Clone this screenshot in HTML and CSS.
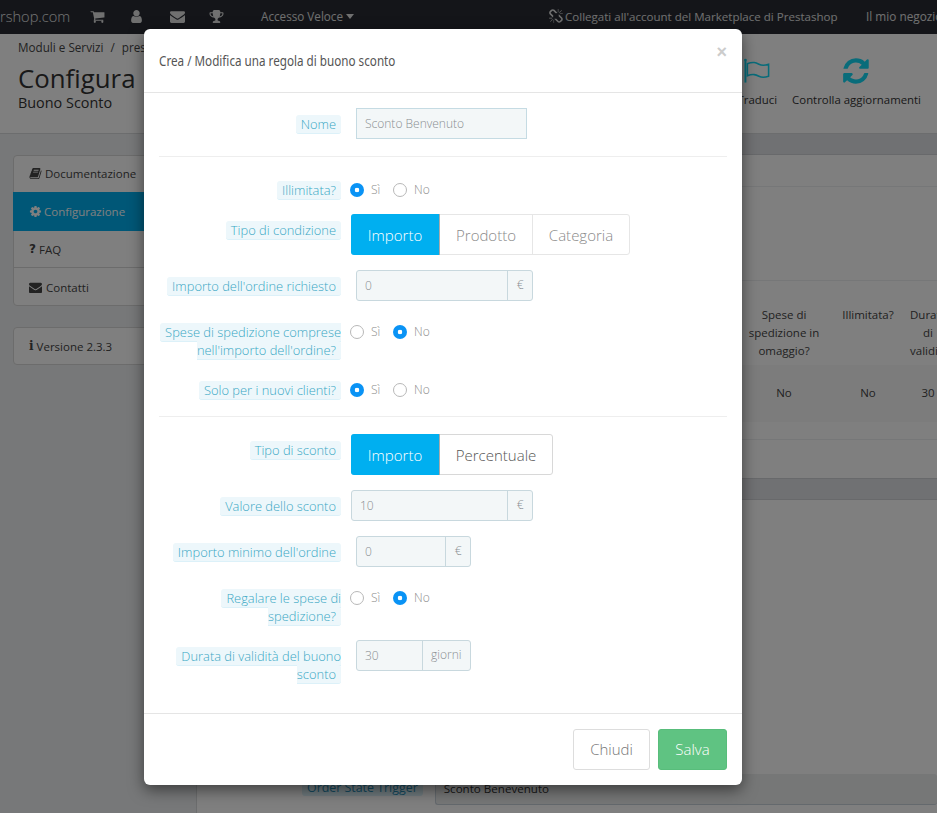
FILE: index.html
```html
<!DOCTYPE html>
<html lang="it">
<head>
<meta charset="utf-8">
<title>Configura Buono Sconto</title>
<link rel="stylesheet" href="styles.css">
</head>
<body>
<div class="page">
  <nav class="topnav">
    <span class="brand">rshop.com</span>
    <svg class="nav-ico ico-cart" viewBox="0 0 1792 1792"><path d="M704 1536q0 52-38 90t-90 38-90-38-38-90 38-90 90-38 90 38 38 90zm896 0q0 52-38 90t-90 38-90-38-38-90 38-90 90-38 90 38 38 90zm128-1088v512q0 24-16.500 42.500t-40.500 21.500l-1044 122q13 60 13 70 0 16-24 64h920q26 0 45 19t19 45-19 45-45 19h-1024q-26 0-45-19t-19-45q0-11 8-31.500t16-36 21.500-40 15.500-29.500l-177-823h-204q-26 0-45-19t-19-45 19-45 45-19h256q16 0 28.500 6.500t19.500 15.500 13 24.500 8 26 5.500 29.500 4.500 26h1201q26 0 45 19t19 45z"/></svg>
    <svg class="nav-ico ico-user" viewBox="0 0 1792 1792"><path d="M1536 1399q0 109-62.500 187t-150.500 78h-854q-88 0-150.500-78t-62.500-187q0-85 8.500-160.500t31.500-152 58.500-131 94-89 134.500-34.500q131 128 313 128t313-128q76 0 134.500 34.500t94 89 58.500 131 31.500 152 8.500 160.500zm-256-887q0 159-112.500 271.500t-271.500 112.500-271.500-112.500-112.500-271.500 112.500-271.500 271.500-112.500 271.500 112.500 112.500 271.500z"/></svg>
    <svg class="nav-ico ico-mail" viewBox="0 0 1792 1792"><path d="M1792 710v794q0 66-47 113t-113 47h-1472q-66 0-113-47t-47-113v-794q44 49 101 87 362 246 497 345 57 42 92.500 65.500t94.500 48 110 24.500h2q51 0 110-24.500t94.500-48 92.500-65.500q170-123 498-345 57-39 100-87zm0-294q0 79-49 151t-122 123q-376 261-468 325-10 7-42.500 30.500t-54 38-52 32.500-57.500 27-50 9h-2q-23 0-50-9t-57.500-27-52-32.500-54-38-42.500-30.500q-91-64-262-182.500t-205-142.500q-62-42-117-115.500t-55-136.500q0-78 41.500-130t118.500-52h1472q65 0 112.500 47t47.500 113z"/></svg>
    <svg class="nav-ico ico-trophy" viewBox="0 0 1792 1792"><path d="M522 883q-74-162-74-371h-256v96q0 78 94.500 162t235.500 113zm1078-275v-96h-256q0 209-74 371 141-29 235.500-113t94.500-162zm128-128v128q0 71-41.500 143t-112 130-173 97.500-215.500 44.500q-42 54-95 95-38 34-52.500 72.500t-14.500 89.500q0 54 30.500 91t97.500 37q75 0 133.500 45.500t58.500 114.500v64q0 14-9 23t-23 9h-832q-14 0-23-9t-9-23v-64q0-69 58.500-114.500t133.500-45.500q67 0 97.500-37t30.500-91q0-51-14.500-89.500t-52.500-72.500q-53-41-95-95-113-5-215.500-44.500t-173-97.500-112-130-41.500-143v-128q0-40 28-68t68-28h288v-96q0-66 47-113t113-47h576q66 0 113 47t47 113v96h288q40 0 68 28t28 68z"/></svg>
    <span class="quick">Accesso Veloce<i class="caret"></i></span>
    <svg class="ico-unlink" viewBox="0 0 1792 1792"><path d="M439 1271l-256 256q-11 9-23 9t-23-9q-9-10-9-23t9-23l256-256q10-9 23-9t23 9q9 10 9 23t-9 23zm169 41v320q0 14-9 23t-23 9-23-9-9-23v-320q0-14 9-23t23-9 23 9 9 23zm-224-224q0 14-9 23t-23 9h-320q-14 0-23-9t-9-23 9-23 23-9h320q14 0 23 9t9 23zm1264 128q0 120-85 203l-147 146q-83 83-203 83-121 0-204-85l-334-335q-21-21-42-56l239-18 273 274q27 27 68 27.500t68-26.500l147-146q28-28 28-67 0-40-28-68l-274-275 18-239q35 21 56 42l336 336q84 86 84 204zm-617-724l-239 18-273-274q-28-28-68-28-39 0-68 27l-147 146q-28 28-28 67 0 40 28 68l274 274-18 240q-35-21-56-42l-336-336q-84-86-84-204 0-120 85-203l147-146q83-83 203-83 121 0 204 85l334 335q21 21 42 56zm633 84q0 14-9 23t-23 9h-320q-14 0-23-9t-9-23 9-23 23-9h320q14 0 23 9t9 23zm-544-544v320q0 14-9 23t-23 9-23-9-9-23v-320q0-14 9-23t23-9 23 9 9 23zm407 151l-256 256q-11 9-23 9t-23-9q-9-10-9-23t9-23l256-256q10-9 23-9t23 9q9 10 9 23t-9 23z"/></svg>
    <span class="market">Collegati all'account del Marketplace di Prestashop</span>
    <span class="shop">Il mio negozio</span>
  </nav>

  <header class="pagehead">
    <div class="head-left">
      <div class="crumbs">Moduli e Servizi <span class="sep">/</span> prestashop</div>
      <h1 class="head-title">Configura</h1>
      <div class="head-sub">Buono Sconto</div>
    </div>
    <div class="toolbar">
      <div class="tool">
        <svg class="tool-ico" viewBox="0 0 28 26" fill="none" stroke="currentColor" stroke-width="1.600"><path d="M1.500 1v24" stroke-width="2"/><circle cx="1.500" cy="1.500" r="1.300" fill="currentColor" stroke="none"/><path d="M3.500 5.500c6-2.500 9-1 12 .5 3 1.500 5.500 1.500 10 0v12.500c-4.500 1.500-7 1.500-10 0-3-1.500-6-3-12-.5z"/></svg>
        <span>Traduci</span>
      </div>
      <div class="tool">
        <svg class="tool-ico tool-ico-fill" viewBox="190 120 1480 1560"><path d="M1639 1056q0 5-1 7-64 268-268 434.500t-478 166.500q-146 0-282.500-55t-243.500-157l-129 129q-19 19-45 19t-45-19-19-45v-448q0-26 19-45t45-19h448q26 0 45 19t19 45-19 45l-137 137q71 66 161 102t187 36q134 0 250-65t186-179q11-17 53-117 8-23 30-23h192q13 0 22.500 9.500t9.500 22.500zm25-800v448q0 26-19 45t-45 19h-448q-26 0-45-19t-19-45 19-45l138-138q-148-137-349-137-134 0-250 65t-186 179q-11 17-53 117-8 23-30 23h-199q-13 0-22.500-9.500t-9.500-22.500v-7q65-268 270-434.500t480-166.500q146 0 284 55.500t245 156.500l130-129q19-19 45-19t45 19 19 45z"/></svg>
        <span>Controlla aggiornamenti</span>
      </div>
    </div>
  </header>

  <div class="content">
    <aside class="sidebar">
      <div class="side-panel">
        <div class="side-item item-doc">
          <svg class="side-ico" viewBox="0 0 1792 1792"><path d="M1703 478q40 57 18 129l-275 906q-19 64-76.500 107.500t-122.500 43.500h-923q-77 0-148.500-53.500t-99.500-131.500q-24-67-2-127 0-4 3-27t4-37q1-8-3-21.500t-3-19.500q2-11 8-21t16.500-23.500 16.500-23.500q23-38 45-91.500t30-91.500q3-10 .5-30t-.5-28q3-11 17-28t17-23q21-36 42-92t25-90q1-9-2.500-32t.5-28q4-13 22-30.500t22-22.500q19-26 42.500-84.500t27.500-96.500q1-8-3-25.500t-2-26.500q2-8 9-18t18-23 17-21q8-12 16.500-30.500t15-35 16-36 19.500-32 26.500-23.500 36-11.500 47.500 5.500l-1 3q38-9 51-9h761q74 0 114 56t18 130l-274 906q-36 119-71.500 153.500t-128.500 34.500h-869q-27 0-38 15-11 16-1 43 24 70 144 70h923q29 0 56-15.500t35-41.500l300-987q7-22 5-57 38 15 59 43zm-1064 2q-4 13 2 22.500t20 9.500h608q13 0 25.500-9.500t16.500-22.500l21-64q4-13-2-22.500t-20-9.500h-608q-13 0-25.500 9.500t-16.500 22.500zm-83 256q-4 13 2 22.500t20 9.500h608q13 0 25.500-9.500t16.500-22.500l21-64q4-13-2-22.500t-20-9.500h-608q-13 0-25.500 9.500t-16.500 22.500z"/></svg>
          Documentazione
        </div>
        <div class="side-item item-active">
          <svg class="side-ico" viewBox="0 0 1792 1792"><path d="M1152 896q0-106-75-181t-181-75-181 75-75 181 75 181 181 75 181-75 75-181zm512-109v222q0 12-8 23t-20 13l-185 28q-19 54-39 91 35 50 107 138 10 12 10 25t-9 23q-27 37-99 108t-94 71q-12 0-26-9l-138-108q-44 23-91 38-16 136-29 186-7 28-36 28h-222q-14 0-24.500-8.500t-11.500-21.500l-28-184q-49-16-90-37l-141 107q-10 9-25 9-14 0-25-11-126-114-165-168-7-10-7-23 0-12 8-23 15-21 51-66.500t54-70.500q-27-50-41-99l-183-27q-13-2-21-12.500t-8-23.500v-222q0-12 8-23t19-13l186-28q14-46 39-92-40-57-107-138-10-12-10-24 0-10 9-23 26-36 98.500-107.500t94.500-71.500q13 0 26 10l138 107q44-23 91-38 16-136 29-186 7-28 36-28h222q14 0 24.500 8.500t11.500 21.500l28 184q49 16 90 37l142-107q9-9 24-9 13 0 25 10 129 119 165 170 7 8 7 22 0 12-8 23-15 21-51 66.500t-54 70.500q26 50 41 98l183 28q13 2 21 12.500t8 23.500z"/></svg>
          Configurazione
        </div>
        <div class="side-item item-faq"><b class="glyph">?</b> FAQ</div>
        <div class="side-item item-contact">
          <svg class="side-ico" viewBox="0 0 1792 1792"><path d="M1792 710v794q0 66-47 113t-113 47h-1472q-66 0-113-47t-47-113v-794q44 49 101 87 362 246 497 345 57 42 92.500 65.500t94.500 48 110 24.500h2q51 0 110-24.500t94.500-48 92.500-65.500q170-123 498-345 57-39 100-87zm0-294q0 79-49 151t-122 123q-376 261-468 325-10 7-42.500 30.500t-54 38-52 32.500-57.500 27-50 9h-2q-23 0-50-9t-57.500-27-52-32.500-54-38-42.500-30.500q-91-64-262-182.500t-205-142.500q-62-42-117-115.500t-55-136.500q0-78 41.500-130t118.500-52h1472q65 0 112.500 47t47.500 113z"/></svg>
          Contatti
        </div>
      </div>
      <div class="side-panel version"><b class="glyph glyph-i">i</b> Versione 2.3.3</div>
    </aside>

    <main class="main">
      <div class="band"></div>
      <div class="sec sec-a"></div>
      <div class="sec sec-b"></div>
      <div class="sec sec-table">
        <div class="t-row t-head">
          <div class="t-fill"></div>
          <div class="t-cell">Spese di<br>spedizione in<br>omaggio?</div>
          <div class="t-cell">Illimitata?</div>
          <div class="t-cell">Durata<br>di<br>validità</div>
        </div>
        <div class="t-row t-body">
          <div class="t-fill"></div>
          <div class="t-cell">No</div>
          <div class="t-cell">No</div>
          <div class="t-cell">30</div>
        </div>
      </div>
      <div class="sec sec-c"></div>
      <div class="band band-2"></div>
      <div class="form-end">
        <span class="end-label">Order State Trigger</span>
        <div class="end-input">Sconto Benevenuto</div>
      </div>
    </main>
  </div>
</div>

<div class="backdrop"></div>

<div class="modal">
  <div class="modal-head">
    <h4 class="modal-title">Crea / Modifica una regola di buono sconto</h4>
    <span class="close">×</span>
  </div>
  <div class="modal-body">
    <div class="row">
      <div class="lab"><span class="pill">Nome</span></div>
      <div class="ctl indent"><div class="text-input">Sconto Benvenuto</div></div>
    </div>
    <hr class="rule">

    <div class="row">
      <div class="lab"><span class="pill">Illimitata?</span></div>
      <div class="ctl radios">
        <span class="radio on"></span><span class="r-text">Sì</span>
        <span class="radio"></span><span class="r-text">No</span>
      </div>
    </div>
    <div class="row">
      <div class="lab"><span class="pill">Tipo di condizione</span></div>
      <div class="ctl">
        <div class="seg">
          <span class="seg-btn active w88">Importo</span>
          <span class="seg-btn muted w93">Prodotto</span>
          <span class="seg-btn muted w98">Categoria</span>
        </div>
      </div>
    </div>
    <div class="row">
      <div class="lab"><span class="pill">Importo dell'ordine richiesto</span></div>
      <div class="ctl indent">
        <div class="group w177"><span class="val">0</span><span class="addon">€</span></div>
      </div>
    </div>
    <div class="row">
      <div class="lab"><span class="pill">Spese di spedizione comprese<br>nell'importo dell'ordine?</span></div>
      <div class="ctl radios">
        <span class="radio"></span><span class="r-text">Sì</span>
        <span class="radio on"></span><span class="r-text">No</span>
      </div>
    </div>
    <div class="row">
      <div class="lab"><span class="pill">Solo per i nuovi clienti?</span></div>
      <div class="ctl radios">
        <span class="radio on"></span><span class="r-text">Sì</span>
        <span class="radio"></span><span class="r-text">No</span>
      </div>
    </div>
    <hr class="rule">

    <div class="row">
      <div class="lab"><span class="pill">Tipo di sconto</span></div>
      <div class="ctl">
        <div class="seg seg-strong">
          <span class="seg-btn active w88">Importo</span>
          <span class="seg-btn w114">Percentuale</span>
        </div>
      </div>
    </div>
    <div class="row">
      <div class="lab"><span class="pill">Valore dello sconto</span></div>
      <div class="ctl">
        <div class="group w182"><span class="val">10</span><span class="addon">€</span></div>
      </div>
    </div>
    <div class="row">
      <div class="lab"><span class="pill">Importo minimo dell'ordine</span></div>
      <div class="ctl indent">
        <div class="group w115"><span class="val">0</span><span class="addon">€</span></div>
      </div>
    </div>
    <div class="row">
      <div class="lab"><span class="pill">Regalare le spese di<br>spedizione?</span></div>
      <div class="ctl radios">
        <span class="radio"></span><span class="r-text">Sì</span>
        <span class="radio on"></span><span class="r-text">No</span>
      </div>
    </div>
    <div class="row">
      <div class="lab"><span class="pill">Durata di validità del buono<br>sconto</span></div>
      <div class="ctl indent">
        <div class="group w115"><span class="val">30</span><span class="addon">giorni</span></div>
      </div>
    </div>
  </div>
  <div class="modal-foot">
    <span class="btn btn-close">Chiudi</span>
    <span class="btn btn-save">Salva</span>
  </div>
</div>
</body>
</html>
```
FILE: styles.css
```css
* { box-sizing: border-box; }
html, body { margin: 0; height: 813px; overflow: hidden; }
body { position: relative; font-family: "Open Sans", sans-serif; font-size: 12px; color: #555; background: #eff1f2; }

.page { display: flex; flex-direction: column; height: 813px; width: 937px; overflow: hidden; }

/* top bar */
.topnav { height: 34px; flex: none; background: #282b33; color: #fff; display: flex; align-items: center; white-space: nowrap; padding-bottom: 2px; }
.brand { font-size: 14.6px; color: #e6e6e6; width: 90px; flex: none; font-weight: 300; }
.nav-ico { width: 15px; height: 15px; fill: #e0e0e0; flex: none; }
.ico-user { margin-left: 24px; }
.ico-mail { margin-left: 26px; }
.ico-trophy { margin-left: 24px; }
.quick { margin-left: 37px; font-size: 11.7px; color: #e0e0e0; width: 288px; flex: none; display: flex; align-items: center; }
.caret { display: inline-block; margin-left: 3px; border: 4px solid transparent; border-top: 5px solid #e0e0e0; border-bottom: 0; }
.ico-unlink { width: 15px; height: 15px; fill: #e0e0e0; flex: none; }
.market { margin-left: 1px; font-size: 11.55px; color: #e0e0e0; width: 301px; flex: none; }
.shop { font-size: 11.8px; color: #e0e0e0; flex: none; }

/* page head */
.pagehead { height: 100px; flex: none; background: #fff; border-bottom: 1px solid #d8dadd; display: flex; justify-content: space-between; color: #333; }
.head-left { padding: 5px 0 0 18px; }
.crumbs { font-size: 11.7px; line-height: 16px; color: #444; white-space: nowrap; }
.sep { margin: 0 4px; }
.head-title { margin: 7px 0 0; font-size: 25.8px; line-height: 32px; font-weight: 400; color: #333; }
.head-sub { font-size: 14.4px; line-height: 18px; color: #333; }
.toolbar { display: flex; gap: 15px; padding: 24px 16px 0 0; }
.tool { display: flex; flex-direction: column; align-items: center; font-size: 11.4px; line-height: 16px; white-space: nowrap; color: #333; }
.tool-ico { width: 27px; height: 26px; color: #12d8f5; margin-bottom: 8px; flex: none; }
.tool-ico-fill { fill: #12d8f5; }

/* content */
.content { flex: 1; display: flex; min-height: 0; }
.sidebar { width: 196px; flex: none; padding: 21px 13px 0 13px; }
.side-panel { background: #fff; border: 1px solid #d8d8d8; border-radius: 4px; color: #444; }
.side-item { display: flex; align-items: center; gap: 3px; padding-left: 15px; border-bottom: 1px solid #d8d8d8; font-size: 11.5px; }
.side-item:last-child { border-bottom: 0; }
.item-doc { height: 36px; border-bottom: 0; padding-bottom: 2px; }
.item-active { height: 39px; background: #00afef; color: #fff; border-bottom: 0; margin: 0 -1px; padding-left: 16px; gap: 2px; }
.item-faq { height: 37px; }
.item-contact { height: 37px; gap: 4px; padding-top: 1px; }
.side-ico { width: 13px; height: 13px; fill: currentColor; flex: none; }
.glyph { font-family: "DejaVu Sans", sans-serif; font-size: 12px; }
.glyph-i { font-family: "DejaVu Serif", serif; margin-right: 3px; }
.version { margin-top: 21px; height: 38px; display: flex; align-items: center; padding-left: 15px; width: 170px; font-size: 11.5px; }

.main { flex: 1; min-width: 0; background: #fff; border-left: 1px solid #d8dadd; }
.band { height: 21px; background: #e1e3e6; border-bottom: 1px solid #d0d3d6; }
.sec { border-bottom: 1px solid #eceef0; }
.sec-a { height: 32px; }
.sec-b { height: 94px; }
.sec-table { height: 159px; padding-top: 24px; }
.t-row { display: grid; grid-template-columns: 545px 84px 84px 36px; text-align: center; white-space: nowrap; color: #444; line-height: 18px; font-size: 11.5px; }
.t-head { height: 60px; padding-top: 1px; }
.t-body { height: 57px; background: #f8f8f8; padding-top: 19px; }
.sec-c { height: 38px; border-bottom: 0; }
.band-2 { border-top: 1px solid #d0d3d6; height: 22px; }
.form-end { display: flex; align-items: flex-start; padding: 274px 0 0 105px; color: #333; }
.end-label { margin-top: 5px; padding: 0 5px; background: #dcf3fb; color: #2a92be; border-radius: 3px; font-size: 12.4px; white-space: nowrap; }
.end-input { margin-left: 12px; flex: 1; height: 31px; line-height: 29px; padding-left: 8px; background: #eceeef; border: 1px solid #c8d2da; border-width: 0 0 1px 1px; border-radius: 3px; font-size: 11.6px; white-space: nowrap; }

/* backdrop + modal */
.backdrop { position: absolute; inset: 0; background: rgba(0, 0, 0, .5); }
.modal { position: absolute; left: 144px; top: 29px; width: 598px; height: 756px; background: #fff; border-radius: 6px; box-shadow: 0 5px 15px rgba(0, 0, 0, .5); display: flex; flex-direction: column; }
.modal-head { height: 64px; flex: none; border-bottom: 1px solid #e5e5e5; padding: 15px 15px 0; display: flex; justify-content: space-between; }
.modal-title { margin: 7px 0 0; font-family: "Noto Sans", "Open Sans", sans-serif; font-size: 14px; line-height: 20px; font-weight: 400; color: #555; white-space: nowrap; transform: scaleX(.834); transform-origin: left center; }
.close { font-family: "Liberation Sans", sans-serif; font-size: 18px; line-height: 16px; font-weight: 700; color: #ccc; }
.modal-body { flex: 1; padding: 15px; }
.row { display: flex; margin-bottom: 15px; }
.lab { width: 182px; flex: none; text-align: right; padding-top: 7px; line-height: 18px; font-size: 12.9px; white-space: nowrap; }
.pill { padding: 0 5px; background: #edf7fb; border-bottom: 1px solid #dcf1f9; border-radius: 3px; color: #39a7c4; font-weight: 300; }
.ctl { margin-left: 10px; min-width: 0; }
.indent { margin-left: 15px; }
.rule { margin: 17px 0; height: 1px; border: 0; background: #eee; }

.text-input { width: 171px; height: 31px; line-height: 29px; padding-left: 8px; background: #f3f7f8; border: 1px solid #c5dbe3; font-size: 12px; color: #8a8f92; font-weight: 300; }

.radios { display: flex; align-items: center; height: 14px; margin: 9px 0 0 9px; }
.radio { width: 14px; height: 14px; border-radius: 50%; border: 1px solid #b8b8b8; background: #fff; flex: none; }
.radio.on { border: 0; background: radial-gradient(circle, #fff 0 2px, #0a93f5 2.6px); }
.r-text { margin: -2px 0 0 7px; width: 22px; font-size: 12px; color: #8c8c8c; font-weight: 300; }

.seg { display: inline-flex; height: 41px; border: 1px solid #e6e6e6; border-radius: 3px; background: #fff; }
.seg-strong { border-color: #d8d8d8; }
.seg-btn { display: flex; align-items: center; justify-content: center; font-size: 15px; font-weight: 300; color: #555; border-left: 1px solid #e6e6e6; }
.seg-btn.active { background: #00aff0; color: #fff; border: 1px solid #aaa; border-width: 0 1px 0 0; margin: -1px 0 -1px -1px; height: 41px; border-radius: 3px 0 0 3px; }
.seg-btn.muted { color: #8a8a8a; }
.active + .seg-btn { border-left: 0; }
.w88 { width: 89px; }
.w93 { width: 92px; }
.w98 { width: 97px; }
.w114 { width: 112px; }

.group { display: flex; height: 31px; border: 1px solid #c8d8de; border-radius: 3px; background: #f3f7f8; font-size: 12px; color: #8a8f92; font-weight: 300; }
.w177 { width: 177px; }
.w182 { width: 182px; }
.w115 { width: 115px; }
.val { flex: 1; line-height: 29px; padding-left: 8px; }
.addon { border-left: 1px solid #c8d8de; line-height: 27px; padding: 0 8.500px; min-width: 24px; text-align: center; }

.modal-foot { height: 72px; flex: none; border-top: 1px solid #e5e5e5; display: flex; justify-content: flex-end; gap: 8px; padding: 15px; }
.btn { height: 41px; display: flex; align-items: center; justify-content: center; font-size: 15px; border-radius: 3px; font-weight: 300; padding-bottom: 2px; }
.btn-close { width: 77px; border: 1px solid #ddd; color: #777; background: #fff; }
.btn-save { width: 69px; background: #5fc382; color: #fff; border: 1px solid #58bd7b; }
```
